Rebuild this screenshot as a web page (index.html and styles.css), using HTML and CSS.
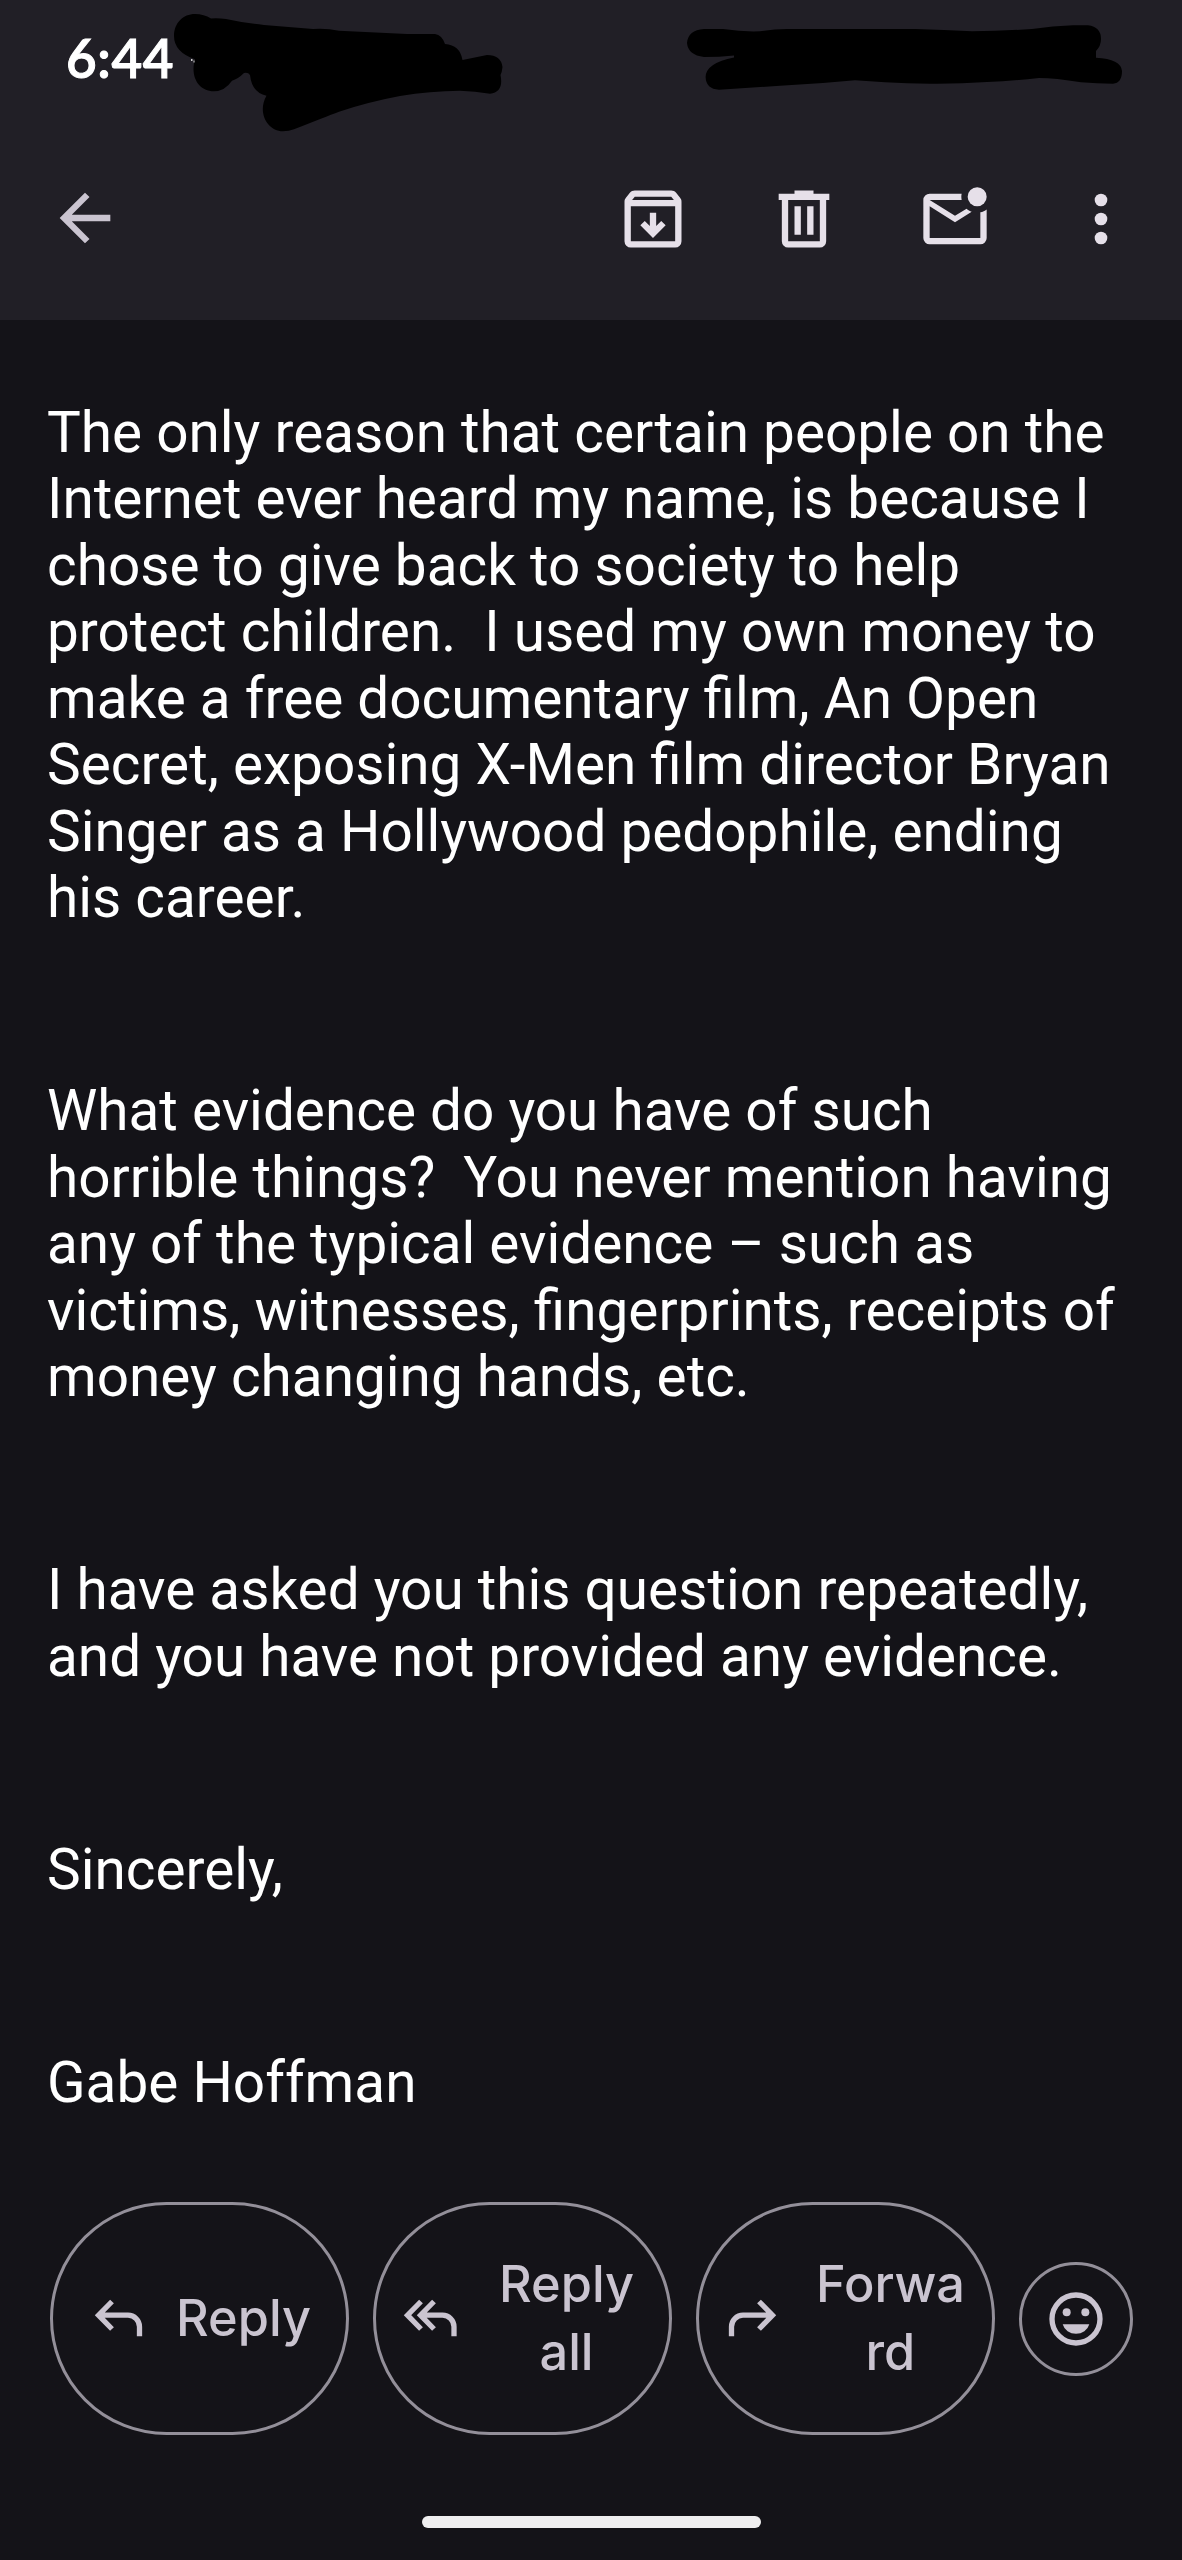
FILE: index.html
```html
<!DOCTYPE html>
<html lang="en">
<head>
    <meta charset="UTF-8">
    <meta name="viewport" content="width=device-width, initial-scale=1.0">
    <title>Mail</title>
    <link rel="stylesheet" href="styles.css">
</head>
<body>
    <div class="screen">
        <header class="header">
            <div class="status-bar">
                <span class="time">6:44</span>
                <!-- marker strokes over the status icons -->
                <svg class="scribble" width="1182" height="140" viewBox="0 0 1182 140">
                    <path d="M174 36C174 23 183 14 195 14Q204 14 211 18.5Q218 18 226 19Q244 23 264 25L313 29Q326 28 339 30.700L407 34H435Q442 35 445 44Q460 45 462.500 60L487 55Q501 55 502.500 67Q502 72 500.500 75Q504 92 490 93.700Q475 91 460 90.700Q430 91 400 96Q368 102 339 111.700Q325 117 294 129.300Q289 131.300 283 131.300C267 131 257 112 266.500 95.700Q252 93 250 75Q248 72 244 73Q238 79 232 80.700Q225 91 214 91.300C198 91 190 76 195 59.300Q174 52 174 36Z"/>
                    <path d="M687 43Q688 30 704 29H723Q743 32 760 31.300Q774 29 787 29H915Q944 30 972 31.300Q1002 31 1032 29Q1053 26 1073 25.300H1088Q1101 27 1101 39Q1101 46 1096 51V57.700Q1121 59 1122 71Q1122 83 1113 83.700Q1097 83.700 1081 82.300Q1055 78 1039 78Q1013 81 987 82Q958 84 930 83.700Q907 83.700 885 82.300L855 80.300Q818 84 780 85.700L719 89.700Q706 89 705.600 77Q706 63 734 57.500V55.500Q719 57 704 57Q688 55 687 43Z"/>
                    <path class="speck" d="M191 59h1.500v2h-1.500zM193.500 60.500h1v2h-1z"/>
                </svg>
            </div>
            <div class="toolbar">
                <svg class="icon back" viewBox="0 0 24 24"><path d="M7.825 13l5.600 5.600L12 20l-8-8 8-8 1.425 1.400L7.825 11H20v2z"/></svg>
                <div class="actions">
                    <svg class="icon" viewBox="0 0 24 24"><path fill-rule="evenodd" d="M5 21q-.825 0-1.413-.587Q3 19.825 3 19V6.525q0-.35.113-.675.112-.325.337-.6L4.700 3.725q.275-.35.687-.538Q5.800 3 6.250 3h11.500q.45 0 .863.187.412.188.687.538l1.250 1.525q.225.275.338.6.112.325.112.675V19q0 .825-.587 1.413Q19.825 21 19 21ZM5.400 6h13.200l-.85-1H6.250ZM5 8v11h14V8ZM12 18l4-4-1.400-1.400-1.600 1.600V10h-2v4.200l-1.600-1.600L8 14Z"/></svg>
                    <svg class="icon" viewBox="0 0 24 24"><path fill-rule="evenodd" d="M7 21q-.825 0-1.412-.587Q5 19.825 5 19V6H4V4h5V3h6v1h5v2h-1v13q0 .825-.587 1.413Q17.825 21 17 21ZM17 6H7v13h10ZM9 17h2V8H9Zm4 0h2V8h-2Z"/></svg>
                    <svg class="icon" viewBox="0 0 24 24"><path d="M4 20q-.825 0-1.412-.587Q2 18.825 2 18V6q0-.825.588-1.412Q3.175 4 4 4h10.100q-.1.5-.1 1t.1 1H4l8 5 3.650-2.275q.35.325.763.562.412.238.862.413L12 13 4 8v10h16V9.900q.575-.125 1.075-.35.5-.225.925-.55v9q0 .825-.587 1.413Q20.825 20 20 20Z"/><circle cx="19" cy="5" r="3"/></svg>
                    <svg class="icon more" viewBox="0 0 24 24"><circle cx="12" cy="6" r="2"/><circle cx="12" cy="12" r="2"/><circle cx="12" cy="18" r="2"/></svg>
                </div>
            </div>
        </header>

        <main class="message">
            <p>The only reason that certain people on the<br>Internet ever heard my name, is because I<br>chose to give back to society to help<br>protect children.&nbsp; I used my own money to<br>make a free documentary film, An Open<br>Secret, exposing X-Men film director Bryan<br>Singer as a Hollywood pedophile, ending<br>his career.</p>
            <p>What evidence do you have of such<br>horrible things?&nbsp; You never mention having<br>any of the typical evidence – such as<br>victims, witnesses, fingerprints, receipts of<br>money changing hands, etc.</p>
            <p>I have asked you this question repeatedly,<br>and you have not provided any evidence.</p>
            <p>Sincerely,</p>
            <p>Gabe Hoffman</p>
        </main>

        <div class="reply-bar">
            <button class="pill reply">
                <svg class="arrow" viewBox="0 0 63 63"><path d="M25 14.500L11.500 28.200L25 42M11.500 28.200H41a11.500 11.500 0 0 1 11.500 11.500V49.200"/></svg>
                <span>Reply</span>
            </button>
            <button class="pill reply-all">
                <svg class="arrow" viewBox="0 0 63 63"><path d="M22 14.500L8.500 28.200L22 42M35 14.500L21.500 28.200L35 42M21.500 28.200H43.500a11.500 11.500 0 0 1 11.500 11.500V49.200"/></svg>
                <span>Reply<br>all</span>
            </button>
            <button class="pill forward">
                <svg class="arrow" viewBox="0 0 63 63"><path d="M38 14.500L51.500 28.200L38 42M51.500 28.200H22a11.500 11.500 0 0 0-11.500 11.500V49.200"/></svg>
                <span>Forwa<br>rd</span>
            </button>
            <button class="emoji">
                <svg viewBox="0 0 24 24"><circle class="face" cx="12" cy="12" r="9"/><circle cx="8.500" cy="9.500" r="1.500"/><circle cx="15.500" cy="9.500" r="1.500"/><path d="M7 14h10q-.45 1.600-1.850 2.550T12 17.500t-3.150-.95T7 14z"/></svg>
            </button>
        </div>

        <div class="home-bar"></div>
    </div>
</body>
</html>
```
FILE: styles.css
```css
body {
    margin: 0;
    background-color: #141318;
    font-family: Roboto, sans-serif;
}

.screen {
    width: 1182px;
    height: 2560px;
    display: flex;
    flex-direction: column;
    overflow: hidden;
}

.header {
    height: 320px;
    flex-shrink: 0;
    background-color: #211f26;
}

.status-bar {
    position: relative;
    height: 140px;
    box-sizing: border-box;
    padding: 26px 0 0 66px;
}

.time {
    font-family: Lato, sans-serif;
    font-size: 53px;
    font-weight: 600;
    line-height: 64px;
    letter-spacing: 0.6px;
    color: #fff;
    -webkit-text-stroke: 1px #fff;
}

.scribble {
    position: absolute;
    left: 0;
    top: 0;
    fill: #000;
}

.speck {
    fill: #ccc;
}

.toolbar {
    display: flex;
    justify-content: space-between;
    padding: 41px 43px 0 48px;
}

.actions {
    display: flex;
    gap: 75px;
}

.icon {
    width: 76px;
    height: 76px;
    fill: #e6e0e9;
}

.back {
    margin: -1px 0 0 -1px;
    fill: #cac4d0;
}

.more {
    margin-left: -5px;
}

.message {
    height: 1882px;
    box-sizing: border-box;
    flex-shrink: 0;
    padding: 79.6px 0 0 47px;
    font-size: 56.7px;
    line-height: 66.5px;
    color: #fff;
    white-space: nowrap;
}

.message p {
    margin: 0 0 146.7px;
}

.reply-bar {
    display: flex;
    align-items: center;
    gap: 24px;
    height: 233px;
    padding-left: 50px;
}

button {
    box-sizing: border-box;
    display: flex;
    align-items: center;
    background: none;
    border: 3px solid #938f99;
    color: #cac4d0;
    font-family: Inter, sans-serif;
    font-size: 50.5px;
    font-weight: 500;
    line-height: 68px;
}

.pill {
    width: 299px;
    height: 233px;
    border-radius: 117px;
}

.pill span {
    margin-top: -2px;
    text-align: center;
}

.reply {
    padding: 0 0 0 34px;
    gap: 26px;
}

.reply-all {
    padding: 0 0 0 23px;
    gap: 37px;
}

.forward {
    padding: 0 0 0 22px;
    gap: 32px;
}

.arrow {
    width: 63px;
    height: 63px;
    flex-shrink: 0;
    fill: none;
    stroke: #cac4d0;
    stroke-width: 5.3;
}

.emoji {
    width: 114px;
    height: 114px;
    padding: 0;
    justify-content: center;
    border-radius: 50%;
}

.emoji svg {
    width: 64px;
    height: 64px;
    fill: #cac4d0;
}

.emoji .face {
    fill: none;
    stroke: #cac4d0;
    stroke-width: 2;
}

.home-bar {
    width: 339px;
    height: 12px;
    margin: 81px auto 0;
    border-radius: 6px;
    background-color: #f0eff0;
}
```
